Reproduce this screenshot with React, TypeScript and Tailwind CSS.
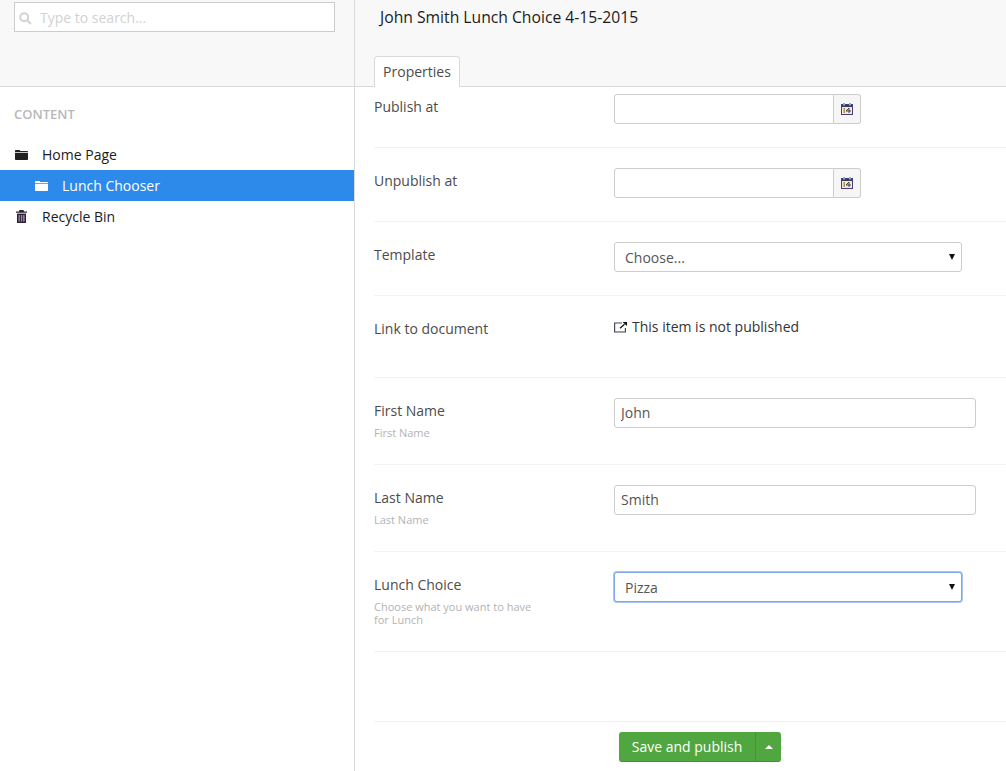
import type { ReactNode } from 'react';

const font = "font-['Open_Sans',sans-serif]";

function FolderIcon({ className }: { className: string }) {
  return (
    <svg viewBox="0 0 13 10" className={className} fill="currentColor">
      <path d="M0 1.2C0 .5.4 0 1 0h3.2c.5 0 .8.3 1 .9H12c.6 0 1 .4 1 1V2H0V1.2z" />
      <path d="M0 2.8h13V9c0 .6-.4 1-1 1H1c-.6 0-1-.4-1-1V2.8z" />
    </svg>
  );
}

function TrashIcon() {
  return (
    <svg viewBox="0 0 11 13" className="w-[11px] h-[13px]">
      <path d="M3.5 0h4l.6 1.5H11v1.3H0V1.5h2.9L3.5 0z" fill="#2a2430" />
      <rect x="1" y="3.6" width="9" height="9.4" fill="#2a2430" />
      <rect x="2.5" y="5" width="1.3" height="6.6" fill="#b26fd0" />
      <rect x="4.9" y="5" width="1.3" height="6.6" fill="#9a7fe0" />
      <rect x="7.2" y="5" width="1.3" height="6.6" fill="#c97fc0" />
    </svg>
  );
}

function CalendarIcon() {
  return (
    <svg width="12" height="12" viewBox="0 0 12 12" className="block">
      <rect x="0.5" y="1.5" width="11" height="10" fill="#efeadb" stroke="#4a3d7a" />
      <rect x="1" y="2" width="10" height="2" fill="#3d3a4a" />
      <rect x="2" y="0" width="2" height="2.5" fill="#7fb4d8" />
      <rect x="8" y="0" width="2" height="2.5" fill="#7fb4d8" />
      <rect x="2.5" y="5" width="1.4" height="5" fill="#a98a4c" />
      <path d="M5 8h5M8 5v5M5 8l3-3" fill="none" stroke="#444" strokeWidth="1" />
    </svg>
  );
}

function ExternalIcon() {
  return (
    <svg width="13" height="11" viewBox="0 0 13 11" className="block" fill="none">
      <path d="M8 1H.6v9h10.8V6" stroke="#4b4653" strokeWidth="1.2" />
      <path d="M1 9.5h10" stroke="#9a96a0" strokeWidth="1" />
      <path d="M6 6.2l4.5-4" stroke="#111" strokeWidth="1.3" />
      <path d="M8.5 0H13v4z" fill="#111" />
    </svg>
  );
}

function DateField() {
  return (
    <div className="flex w-[247px] h-[30px]">
      <input className="w-[220px] h-full bg-white border border-[#ccc] rounded-l-[3px] px-2 outline-none" />
      <div className="w-[27px] h-full bg-[#f6f6f6] border border-l-0 border-[#ccc] rounded-r-[3px] flex items-center justify-center">
        <CalendarIcon />
      </div>
    </div>
  );
}

function SelectField({ value, focused }: { value: string; focused?: boolean }) {
  return (
    <div className="relative w-[348px] h-[30px]">
      <select
        defaultValue={value}
        className={
          focused
            ? 'appearance-none w-full h-full bg-white border border-[#7fa8ea] shadow-[0_0_0_1px_#a9c4f0] rounded-[3px] px-[10px] pt-[2px] text-sm text-[#555] outline-none'
            : 'appearance-none w-full h-full bg-white border border-[#ccc] rounded-[3px] px-[10px] pt-[2px] text-sm text-[#555] outline-none'
        }
      >
        <option>{value}</option>
      </select>
      <span className="absolute right-[7px] top-[12px] w-0 h-0 border-x-[3px] border-x-transparent border-t-[6px] border-t-[#111] pointer-events-none" />
    </div>
  );
}

function TextField({ value }: { value: string }) {
  return (
    <input
      defaultValue={value}
      className="w-[362px] h-[30px] bg-white border border-[#ccc] rounded-[3px] px-[6px] pb-[2px] text-sm text-[#555] outline-none"
    />
  );
}

function Label({ title, hint }: { title: string; hint?: ReactNode }) {
  return (
    <div className="w-[240px] shrink-0 pt-[3px]">
      <div className="text-sm leading-[20px] text-[#4c4c4c]">{title}</div>
      {hint && <div className="mt-[5px] text-[11px] leading-[13px] text-[#b3b3b3] w-[165px]">{hint}</div>}
    </div>
  );
}

export default function App() {
  return (
    <div className={`${font} flex h-[771px] w-[1006px] overflow-hidden bg-white`}>
      {/* Tree */}
      <aside className="w-[355px] shrink-0 border-r border-[#d9d9d9] flex flex-col">
        <div className="h-[87px] bg-[#f8f8f8] border-b border-[#d9d9d9] px-[14px] pt-[2px]">
          <div className="relative">
            <svg viewBox="0 0 13 13" className="absolute left-[5px] top-[10px] w-[13px] h-[13px]" fill="none" stroke="#d2d2d2" strokeWidth="2">
              <circle cx="5.2" cy="5.2" r="4" />
              <path d="M8.2 8.2L12 12" />
            </svg>
            <input
              placeholder="Type to search..."
              className="w-[321px] h-[30px] bg-white border border-[#ccc] pl-[25px] text-sm outline-none placeholder:text-[#d2d2d2]"
            />
          </div>
        </div>
        <div className="px-[14px] pt-[18px] pb-[16px] text-[13px] font-semibold leading-[18px] text-[#b8b8b8]">CONTENT</div>
        <div className="flex flex-col text-sm text-[#1b1b1b]">
          <div className="flex items-center h-[31px] pl-[15px] gap-[14px]">
            <FolderIcon className="w-[13px] h-[10px] text-[#1f1f1f]" />
            <span>Home Page</span>
          </div>
          <div className="flex items-center h-[31px] pl-[35px] gap-[14px] bg-[#2e8aea] text-white">
            <FolderIcon className="w-[13px] h-[10px] text-white" />
            <span>Lunch Chooser</span>
          </div>
          <div className="flex items-center h-[31px] pl-[16px] gap-[15px]">
            <TrashIcon />
            <span>Recycle Bin</span>
          </div>
        </div>
      </aside>

      {/* Editor */}
      <main className="flex-1 flex flex-col min-w-0">
        <div className="h-[87px] bg-[#f8f8f8] border-b border-[#d9d9d9] relative pl-[25px] pt-[6px]">
          <h1 className="text-[15.7px] leading-[22px] text-[#1b1b1b]">John Smith Lunch Choice 4-15-2015</h1>
          <div className="absolute left-[19px] bottom-[-1px] h-[31px] w-[86px] bg-white border border-b-0 border-[#d9d9d9] rounded-t-[4px] flex items-center justify-center text-sm text-[#4c4c4c]">
            Properties
          </div>
        </div>

        <div className="flex-1 pl-[19px] flex flex-col">
          <div className="flex h-[61px] pt-[7px] border-b border-[#f3f3f3]">
            <Label title="Publish at" />
            <DateField />
          </div>
          <div className="flex h-[74px] pt-[20px] border-b border-[#f3f3f3]">
            <Label title="Unpublish at" />
            <DateField />
          </div>
          <div className="flex h-[74px] pt-[20px] border-b border-[#f3f3f3]">
            <Label title="Template" />
            <SelectField value="Choose..." />
          </div>
          <div className="flex h-[82px] pt-[20px] border-b border-[#f3f3f3]">
            <Label title="Link to document" />
            <div className="flex items-center gap-[5px] h-[20px] mt-[1px] text-sm text-[#333]">
              <ExternalIcon />
              <span>This item is not published</span>
            </div>
          </div>
          <div className="flex h-[87px] pt-[20px] border-b border-[#f3f3f3]">
            <Label title="First Name" hint="First Name" />
            <TextField value="John" />
          </div>
          <div className="flex h-[87px] pt-[20px] border-b border-[#f3f3f3]">
            <Label title="Last Name" hint="Last Name" />
            <TextField value="Smith" />
          </div>
          <div className="flex h-[100px] pt-[20px] border-b border-[#f3f3f3]">
            <Label title="Lunch Choice" hint="Choose what you want to have for Lunch" />
            <SelectField value="Pizza" focused />
          </div>
          <div className="h-[70px] border-b border-[#f3f3f3]" />
          <div className="flex pl-[245px] pt-[10px]">
            <div className="flex h-[30px] rounded-[3px] bg-[#50a63f] border-b border-[#45923a] text-white">
              <button className="w-[137px] text-sm border-r border-[#45923a]">Save and publish</button>
              <button className="w-[25px] flex items-center justify-center">
                <span className="w-0 h-0 border-x-[4px] border-x-transparent border-b-[4px] border-b-white" />
              </button>
            </div>
          </div>
        </div>
      </main>
    </div>
  );
}
